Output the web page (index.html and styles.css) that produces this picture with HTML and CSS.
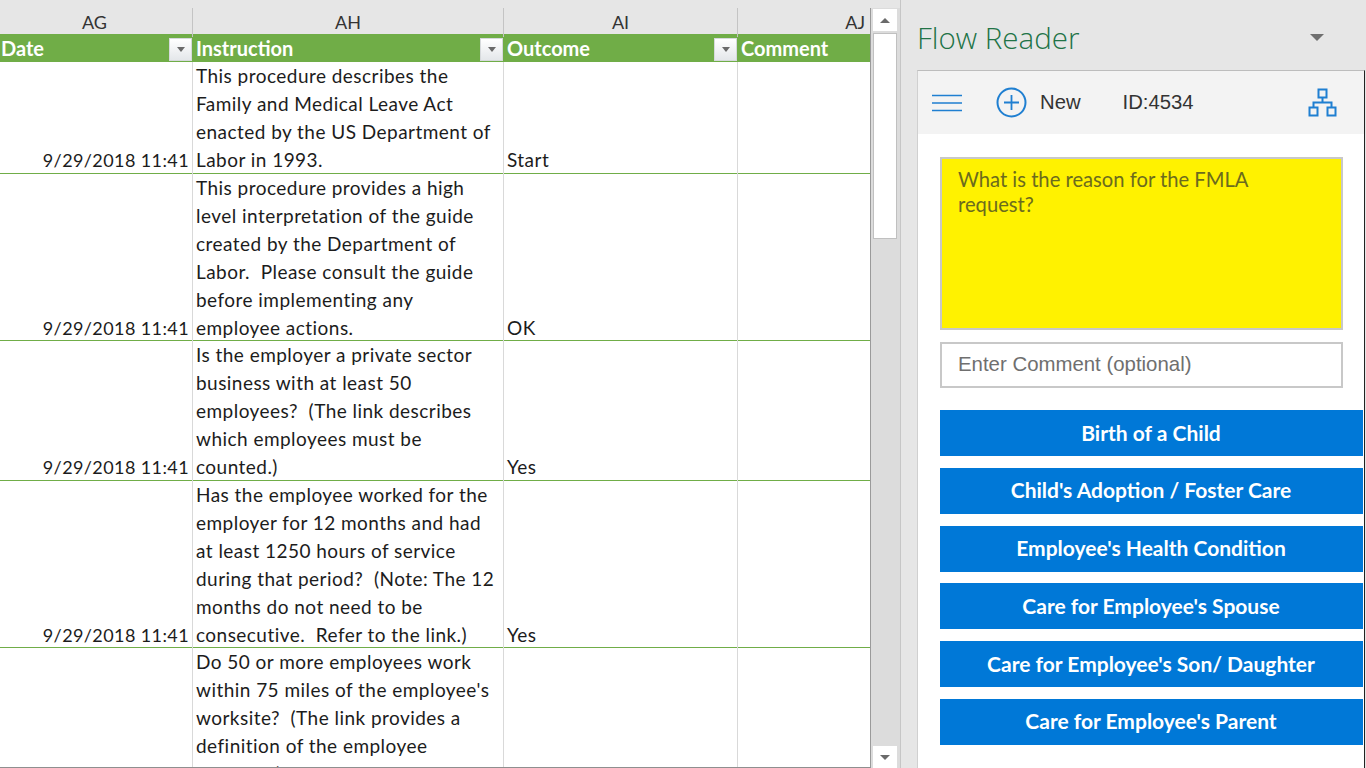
FILE: index.html
```html
<!DOCTYPE html>
<html lang="en">
<head>
<meta charset="utf-8">
<title>Flow Reader</title>
<link rel="stylesheet" href="styles.css">
</head>
<body>
<main class="app">
  <section class="sheet">
    <div class="grid">
      <div class="letters">
        <div class="letter">AG</div><div class="letter">AH</div><div class="letter">AI</div><div class="letter letter-end">AJ</div>
      </div>
      <div class="filters">
        <div class="fcell">Date<span class="fbtn"></span></div>
        <div class="fcell">Instruction<span class="fbtn"></span></div>
        <div class="fcell">Outcome<span class="fbtn"></span></div>
        <div class="fcell">Comment</div>
      </div>
      <div class="row">
        <div class="cell date">9/29/2018 11:41</div>
        <div class="cell">This procedure describes the<br>Family and Medical Leave Act<br>enacted by the US Department of<br>Labor in 1993.</div>
        <div class="cell">Start</div>
        <div class="cell"></div>
      </div>
      <div class="row">
        <div class="cell date">9/29/2018 11:41</div>
        <div class="cell">This procedure provides a high<br>level interpretation of the guide<br>created by the Department of<br>Labor.&nbsp; Please consult the guide<br>before implementing any<br>employee actions.</div>
        <div class="cell">OK</div>
        <div class="cell"></div>
      </div>
      <div class="row">
        <div class="cell date">9/29/2018 11:41</div>
        <div class="cell">Is the employer a private sector<br>business with at least 50<br>employees?&nbsp; (The link describes<br>which employees must be<br>counted.)</div>
        <div class="cell">Yes</div>
        <div class="cell"></div>
      </div>
      <div class="row">
        <div class="cell date">9/29/2018 11:41</div>
        <div class="cell">Has the employee worked for the<br>employer for 12 months and had<br>at least 1250 hours of service<br>during that period?&nbsp; (Note: The 12<br>months do not need to be<br>consecutive.&nbsp; Refer to the link.)</div>
        <div class="cell">Yes</div>
        <div class="cell"></div>
      </div>
      <div class="row row-last">
        <div class="cell date">9/29/2018 11:41</div>
        <div class="cell">Do 50 or more employees work<br>within 75 miles of the employee's<br>worksite?&nbsp; (The link provides a<br>definition of the employee<br>worksite.)</div>
        <div class="cell"></div>
        <div class="cell"></div>
      </div>
    </div>
    <div class="scrollbar">
      <div class="sbtn"><span class="tri-up"></span></div>
      <div class="thumb"></div>
      <div class="track"></div>
      <div class="sbtn"><span class="tri-down"></span></div>
    </div>
  </section>

  <aside class="pane">
    <header class="pane-head">
      <h1 class="pane-title">Flow Reader</h1>
      <span class="pane-caret"></span>
    </header>
    <div class="panel">
      <div class="toolbar">
        <svg class="ic-menu" width="30" height="18" viewBox="0 0 30 18" aria-hidden="true"><path d="M0 1.5h30M0 9h30M0 16.500h30" stroke="#1f7fd1" stroke-width="1.600" fill="none"/></svg>
        <svg class="ic-plus" width="31" height="31" viewBox="0 0 31 31" aria-hidden="true"><circle cx="15.500" cy="15.500" r="14" stroke="#1f7fd1" stroke-width="2" fill="none"/><path d="M15.500 8v15M8 15.500h15" stroke="#1f7fd1" stroke-width="1.800" fill="none"/></svg>
        <span class="tb-new">New</span>
        <span class="tb-id">ID:4534</span>
        <svg class="ic-org" width="29" height="29" viewBox="0 0 29 29" aria-hidden="true"><g stroke="#1f7fd1" stroke-width="2" fill="none"><rect x="10.500" y="1.500" width="8" height="8"/><rect x="1.500" y="19.500" width="8" height="8"/><rect x="19.500" y="19.500" width="8" height="8"/><path d="M14.500 9.500v5M5.500 19.500v-5h18v5"/></g></svg>
      </div>
      <div class="panel-body">
        <div class="question">What is the reason for the FMLA request?</div>
        <div class="comment">Enter Comment (optional)</div>
        <div class="choices">
          <div class="choice">Birth of a Child</div>
          <div class="choice">Child's Adoption / Foster Care</div>
          <div class="choice">Employee's Health Condition</div>
          <div class="choice">Care for Employee's Spouse</div>
          <div class="choice">Care for Employee's Son/ Daughter</div>
          <div class="choice">Care for Employee's Parent</div>
        </div>
      </div>
    </div>
  </aside>
</main>
</body>
</html>
```
FILE: styles.css
```css
* { box-sizing: border-box; }
html, body { margin: 0; height: 768px; overflow: hidden; }
body { background: #e6e6e6; font-family: "Lato", "Liberation Sans", sans-serif; }
.app { display: flex; width: 1366px; height: 768px; overflow: hidden; }

.sheet { display: flex; width: 901px; flex: none; height: 768px; padding-top: 8px; border-right: 1px solid #c6c6c6; }
.grid { width: 871px; flex: none; height: 760px; overflow: hidden; background: #fff; border-bottom: 1px solid #8f8f8f; border-right: 1px solid #9a9a9a; }

.letters, .filters, .row { display: grid; grid-template-columns: 193px 311px 234px 133px; }
.letters { height: 26px; background: #e6e6e6; }
.letter { font-size: 18px; line-height: 29px; text-align: center; color: #333; border-right: 1px solid #c4c4c4; }
.letter:first-child { padding-right: 3px; }
.letter-end { text-align: right; padding-right: 6px; border-right: 0; }

.filters { height: 28px; background: #70ad47; }
.fcell { display: flex; align-items: center; justify-content: space-between; color: #fff; font-size: 20px; line-height: 26px; font-weight: 700; padding: 0 1px 1px 3px; }
.fcell:first-child { padding-left: 1px; }
.fbtn { position: relative; width: 23px; height: 23px; margin-top: 3px; background: linear-gradient(#fff, #e4e7ea); border: 1px solid #d6d9dc; }
.fbtn::after { content: ""; position: absolute; left: 7px; top: 8px; border: 4px solid transparent; border-top: 5px solid #6a6a6a; border-bottom: 0; }

.row { border-bottom: 1px solid #70ad47; }
.row:nth-of-type(3) { height: 112px; }
.row:nth-of-type(4) { height: 167px; }
.row:nth-of-type(5) { height: 140px; }
.row:nth-of-type(6) { height: 167px; }
.row:nth-of-type(6) .cell { padding-bottom: 1px; }
.row-last { height: 140px; border-bottom: 0; }
.cell { display: flex; flex-direction: column; justify-content: flex-end; align-items: flex-start; padding: 0 3px; font-size: 19px; letter-spacing: 0.460px; line-height: 28px; color: #1c1c1c; border-right: 1px solid #d9d9d9; white-space: nowrap; }
.cell:last-child { border-right: 0; }
.date { align-items: flex-end; font-size: 18px; letter-spacing: 0.400px; }

.scrollbar { display: flex; flex-direction: column; width: 29px; flex: none; height: 760px; padding: 1px 3px 0 2px; background: #dcdcdc; }
.sbtn { height: 22px; flex: none; background: #fff; display: flex; align-items: center; justify-content: center; }
.thumb { height: 206px; flex: none; margin-top: 2px; background: #fff; border: 1px solid #c0c0c0; }
.track { flex: 1; }
.tri-up { border: 5px solid transparent; border-bottom: 5px solid #6a6a6a; border-top: 0; }
.tri-down { border: 5px solid transparent; border-top: 5px solid #6a6a6a; border-bottom: 0; }

.pane { flex: 1; min-width: 0; height: 768px; padding-left: 16px; }
.pane-head { display: flex; align-items: center; justify-content: space-between; height: 70px; padding: 4px 42px 0 0; }
.pane-title { margin: 0; font-family: "Open Sans", sans-serif; font-weight: 300; font-size: 29.500px; color: #217346; }
.pane-caret { border: 7px solid transparent; border-top: 7px solid #6f6f6f; border-bottom: 0; }

.panel { width: 448px; height: 698px; background: #fff; border-top: 1px solid #bdbdbd; border-left: 1px solid #d0d0d0; border-right: 1px solid #222; }
.toolbar { display: flex; align-items: center; height: 63px; padding: 0 14px; background: #f3f3f3; }
.ic-menu { margin-right: 34px; }
.ic-plus { margin-right: 13px; }
.tb-new, .tb-id { font-family: "Liberation Sans", sans-serif; font-size: 20.300px; color: #333; }
.tb-id { margin-left: 42px; }
.ic-org { margin-left: auto; margin-right: 13px; }

.panel-body { padding: 23px 0 0 22px; }
.question { width: 403px; height: 173px; padding: 8px 16px; background: #fff200; border: 2px solid #c8c8c8; font-size: 20.200px; line-height: 25px; color: #6b6b1e; }
.comment { display: flex; align-items: center; width: 403px; height: 46px; margin-top: 12px; padding: 0 16px 2px; border: 2px solid #c8c8c8; font-family: "Liberation Sans", sans-serif; font-size: 20.400px; color: #6f6f6f; }
.choices { display: flex; flex-direction: column; gap: 11.800px; margin-top: 22px; }
.choice { display: flex; align-items: center; justify-content: center; width: 423px; height: 46px; padding: 0 1px 2px 0; background: #0078d7; color: #fff; font-size: 21px; font-weight: 700; }
```
